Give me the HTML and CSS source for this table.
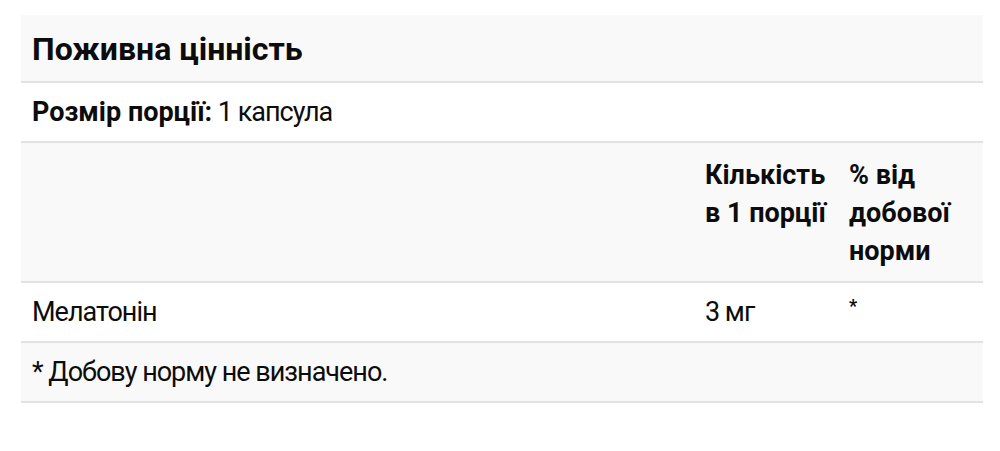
FILE: index.html
```html
<!DOCTYPE html>
<html lang="uk">
<head>
<meta charset="utf-8">
<title>Поживна цінність</title>
<link rel="stylesheet" href="styles.css">
</head>
<body>
<div class="wrap">
  <table class="facts">
    <colgroup>
      <col class="c-name">
      <col class="c-amount">
      <col class="c-dv">
    </colgroup>
    <tbody>
      <tr class="shade">
        <th colspan="3" class="title">Поживна цінність</th>
      </tr>
      <tr>
        <td colspan="3"><strong>Розмір порції:</strong> 1 капсула</td>
      </tr>
      <tr class="shade heads">
        <th></th>
        <th>Кількість в 1 порції</th>
        <th>% від добової норми</th>
      </tr>
      <tr>
        <td>Мелатонін</td>
        <td>3 мг</td>
        <td class="star">*</td>
      </tr>
      <tr class="shade">
        <td colspan="3">* Добову норму не визначено.</td>
      </tr>
    </tbody>
  </table>
</div>
</body>
</html>
```

FILE: styles.css
```css
html, body {
  margin: 0;
  padding: 0;
  background: #ffffff;
}

.wrap {
  padding: 15px 17px 0 21px;
}

.facts {
  width: 100%;
  border-collapse: collapse;
  table-layout: fixed;
  font-family: Roboto, "Noto Sans", sans-serif;
  font-size: 27px;
  line-height: 38px;
  letter-spacing: -1px;
  color: #0c0c0c;
}

.c-amount { width: 144px; }
.c-dv { width: 145px; }

.facts th,
.facts td {
  text-align: left;
  vertical-align: top;
  padding: 10px 6px 10px 11px;
  border-bottom: 2px solid #e2e2e2;
}

.facts th,
.facts strong {
  font-weight: 700;
  letter-spacing: 0;
}

.facts tr.shade th,
.facts tr.shade td {
  background: #f9f9f9;
}

.facts .title {
  font-size: 32px;
  line-height: 46px;
  padding-top: 11px;
  padding-bottom: 9px;
}

.facts .heads th {
  padding-top: 13px;
  padding-bottom: 11px;
}

.facts .star {
  font-size: 18px;
  font-weight: 700;
  line-height: 26px;
}
```
